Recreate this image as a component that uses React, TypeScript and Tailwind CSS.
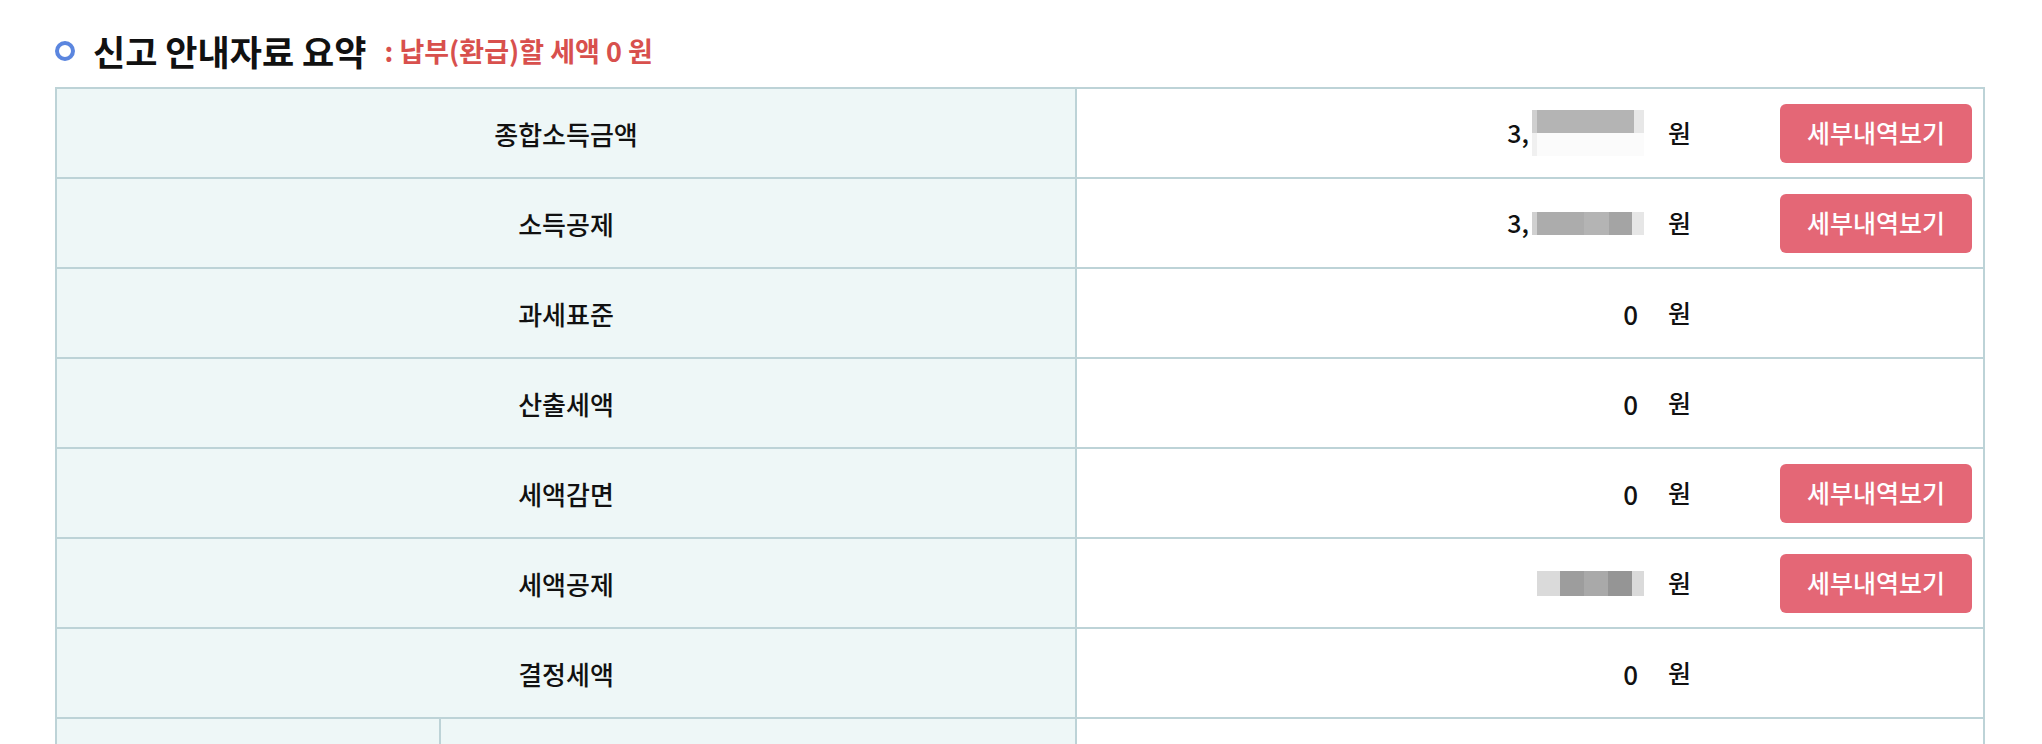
const rows = [
  { label: "종합소득금액", value: "blur1", detail: true },
  { label: "소득공제", value: "blur2", detail: true },
  { label: "과세표준", value: "0", detail: false },
  { label: "산출세액", value: "0", detail: false },
  { label: "세액감면", value: "0", detail: true },
  { label: "세액공제", value: "blur3", detail: true },
  { label: "결정세액", value: "0", detail: false },
];

const Blur1 = () => (
  <div className="flex items-center">
    <span>3,</span>
    <div className="ml-[3px] flex flex-col">
      <div className="flex h-[23px]">
        <div className="w-[5px] bg-[#cfcfcf]" />
        <div className="w-[97px] bg-[#b4b4b4]" />
        <div className="w-[10px] bg-[#e7e7e7]" />
      </div>
      <div className="flex h-[23px]">
        <div className="w-[5px] bg-[#f0f0f0]" />
        <div className="w-[107px] bg-[#fbfbfb]" />
      </div>
    </div>
  </div>
);

const Blur2 = () => (
  <div className="flex items-center">
    <span>3,</span>
    <div className="ml-[3px] flex h-[23px]">
      <div className="w-[5px] bg-[#d0d0d0]" />
      <div className="w-[47px] bg-[#acacac]" />
      <div className="w-[25px] bg-[#b4b4b4]" />
      <div className="w-[23px] bg-[#a4a4a4]" />
      <div className="w-[12px] bg-[#e6e6e6]" />
    </div>
  </div>
);

const Blur3 = () => (
  <div className="flex h-[25px]">
    <div className="w-[23px] bg-[#dadada]" />
    <div className="w-[24px] bg-[#9d9d9d]" />
    <div className="w-[24px] bg-[#a9a9a9]" />
    <div className="w-[24px] bg-[#959595]" />
    <div className="w-[12px] bg-[#dadada]" />
  </div>
);

const Value = ({ v }: { v: string }) => {
  if (v === "blur1") return <Blur1 />;
  if (v === "blur2") return <Blur2 />;
  if (v === "blur3") return <Blur3 />;
  return <span className="mr-[6px] text-[26px]">{v}</span>;
};

export default function App() {
  return (
    <div className="min-h-screen bg-white pl-[55px] pr-[57px] pt-[31px] font-['Noto_Sans_CJK_KR',sans-serif] text-[#111]">
      <div className="flex h-[40px] items-center">
        <span className="h-[20px] w-[20px] rounded-full border-[4px] border-[#5b86df]" />
        <h2 className="ml-[18px] text-[35px] font-bold">신고 안내자료 요약</h2>
        <span className="ml-[18px] text-[27px] font-semibold text-[#d8504d]">
          : 납부(환급)할 세액 0 원
        </span>
      </div>

      <div className="mt-[16px] border-2 border-[#bdd3d7]">
        {rows.map((row, i) => (
          <div
            key={row.label}
            className={`grid h-[88px] grid-cols-[1020px_1fr] ${
              i > 0 ? "box-content border-t-2 border-[#bdd3d7]" : ""
            }`}
          >
            <div className="flex items-center justify-center border-r-2 border-[#bdd3d7] bg-[#eef7f7] text-[26px] font-medium">
              {row.label}
            </div>
            <div className="flex items-center justify-end pr-[11px] text-[25px] font-medium">
              <Value v={row.value} />
              <span className="ml-[24px]">원</span>
              <div className="ml-[89px] w-[192px]">
                {row.detail && (
                  <button className="flex h-[59px] w-[192px] items-center justify-center rounded-[6px] bg-[#e46776] text-[25px] font-medium text-white">
                    세부내역보기
                  </button>
                )}
              </div>
            </div>
          </div>
        ))}
        <div className="box-content grid h-[88px] grid-cols-[1020px_1fr] border-t-2 border-[#bdd3d7]">
          <div className="grid grid-cols-[384px_1fr] border-r-2 border-[#bdd3d7] bg-[#eef7f7]">
            <div className="border-r-2 border-[#bdd3d7]" />
            <div />
          </div>
          <div />
        </div>
      </div>
    </div>
  );
}
